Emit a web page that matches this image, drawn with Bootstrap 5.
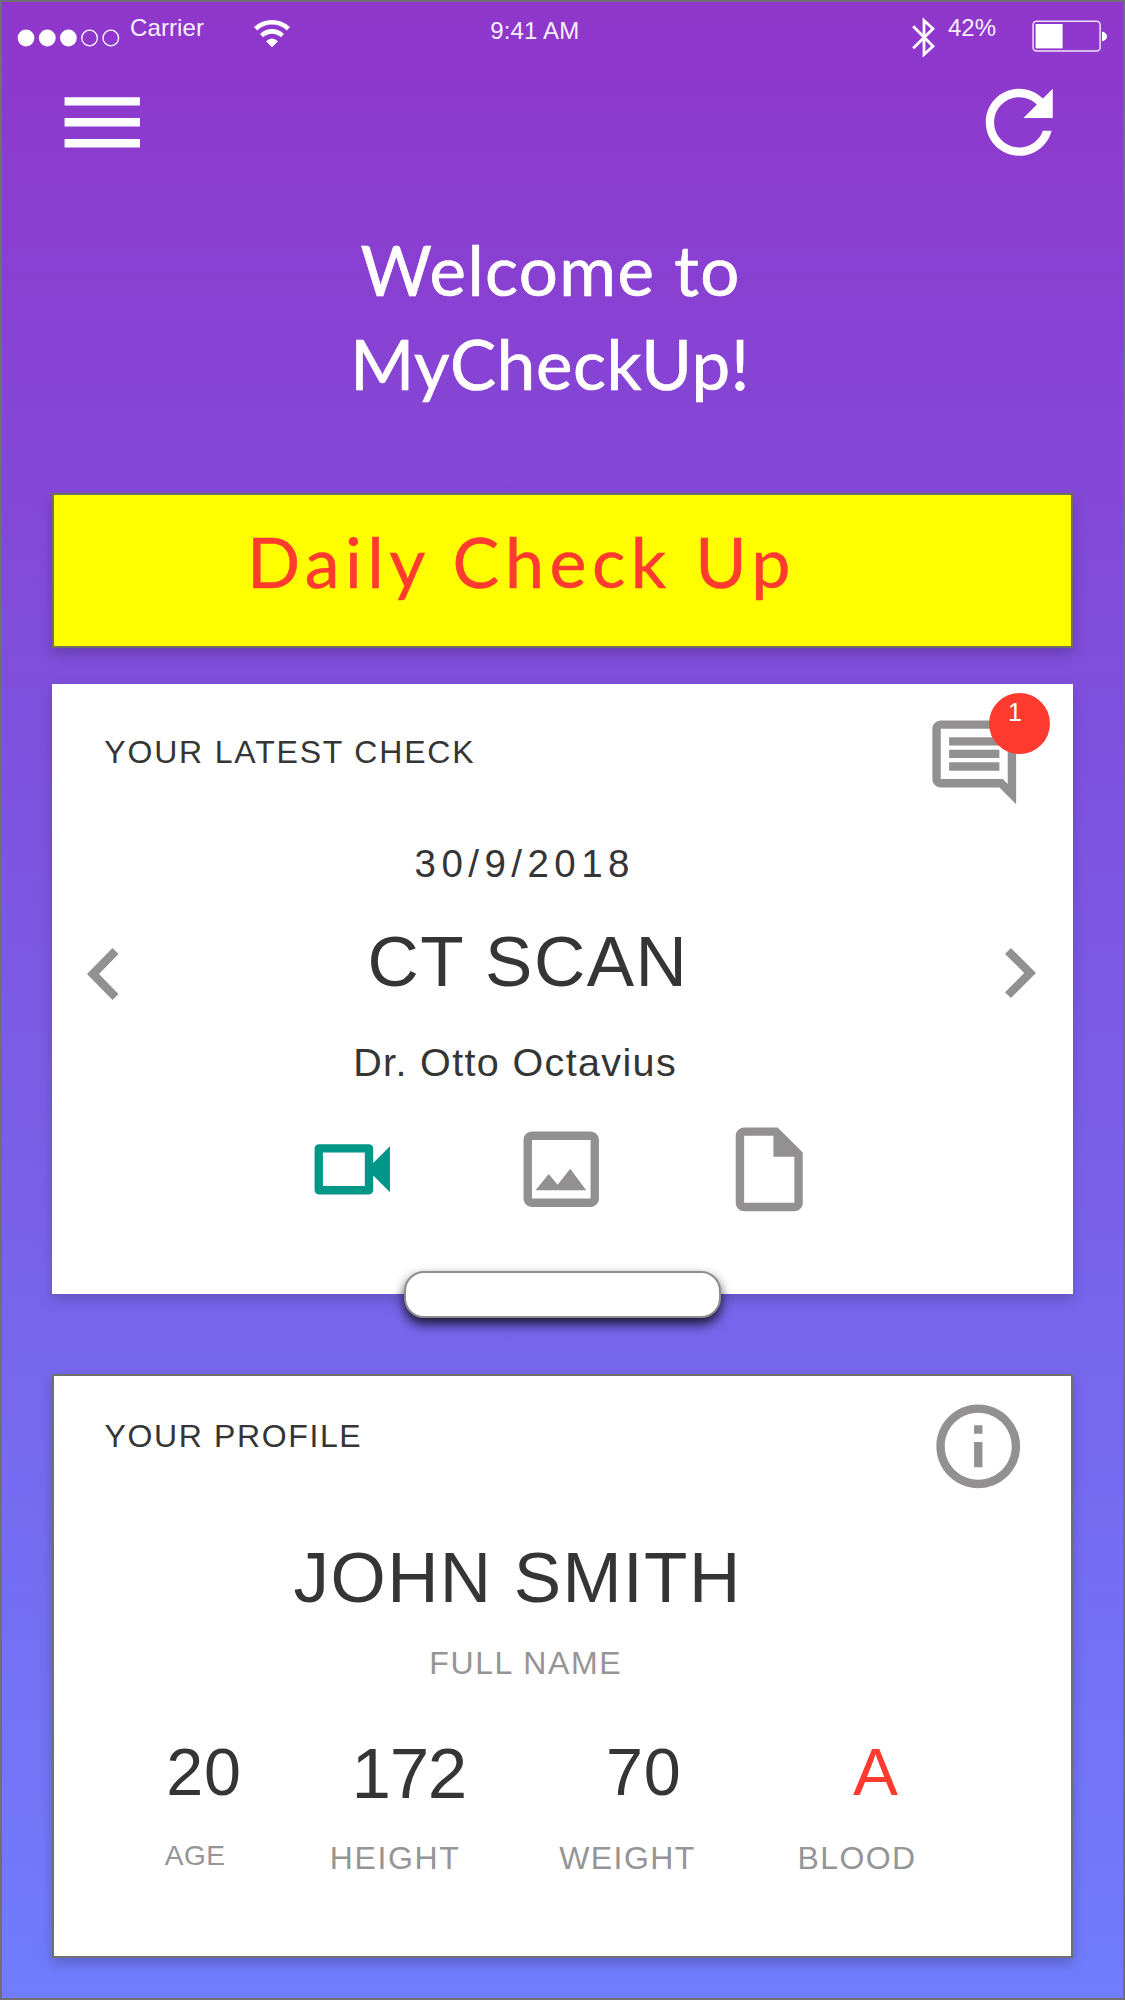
<!DOCTYPE html>
<html lang="en">
<head>
<meta charset="utf-8">
<meta name="viewport" content="width=device-width, initial-scale=1">
<title>MyCheckUp</title>
<link href="https://cdn.jsdelivr.net/npm/bootstrap@5.3.0/dist/css/bootstrap.min.css" rel="stylesheet">
<style>
body{margin:0;font-family:"Liberation Sans",Arial,sans-serif;color:#353535}
svg{display:block;flex:none}
.phone{width:1125px;height:2000px;border:2px solid #707070;background:linear-gradient(#9036cb,#7f4fdc 34%,#707dfc);overflow:hidden}
.tx{white-space:nowrap;font-weight:400;margin-bottom:0}
.ico{width:100.5px;height:100.5px;fill:#929091}
/* status bar */
.status{height:60px;font-size:24px;line-height:28px;color:#f6efff;padding-top:12.4px}
.status-left{width:488.3px;padding-left:14px}
.dots{margin-top:13.400px}
.carrier{margin-left:10px;letter-spacing:.1px;width:124px}
.wifi{margin-top:5.600px}
.clock{margin-top:3px;letter-spacing:.14px}
.status-right{padding-right:15px}
.bt{margin-top:3px}
.pct{margin-left:12px;width:84px}
.batt{margin-top:5.500px}
/* toolbar */
.toolbar{height:110px;padding:9.500px 53.400px 0 49.500px}
.toolbar .ico{fill:#fff}
/* greeting */
.round-type{font-family:Lato,"Noto Sans",sans-serif}
.greet{margin-top:50.500px;font-size:69px;line-height:94.300px;color:#fff;-webkit-text-stroke:.7px #fff}
.greet-a{margin-left:358.600px;letter-spacing:1.400px}
.greet-b{margin-left:348.200px;letter-spacing:.600px}
.banner{margin:82.200px 50px 0 50.300px;height:155px;border:2px solid #6f6f62;background:#ff0;box-shadow:0 6px 12px rgba(0,0,0,.2);padding:26px 0 0 192.600px}
.banner-text{font-size:70px;line-height:80px;letter-spacing:5.500px;color:#ff3b30;-webkit-text-stroke:.5px #ff3b30}
/* latest check */
.latest{margin:35.300px 50px 0 50px;height:610.400px;background:#fff;box-shadow:0 6px 12px rgba(0,0,0,.18)}
.head{padding:28.300px 48.700px 0 52.300px}
.head-title{font-size:32px;line-height:40px;letter-spacing:1.820px;margin-top:20.500px}
.count{left:64.700px;top:-19.300px;width:61.400px;height:61.400px;background:#ff3b30;color:#fff;font-size:25px;line-height:26px;padding:6px 0 0 19.600px}
.video{fill:#009688}
.chev{fill:#929091}
.chev-l{margin:136px 0 0 35px}
.chev-r{margin:135.400px 37px 0 0}
.date{margin:29.800px 0 0 296.100px;font-size:38.500px;line-height:44px;letter-spacing:5.450px}
.scan{margin:35.900px 0 0 249px;font-size:71px;line-height:80px;letter-spacing:1.500px}
.doc{margin:37.700px 0 0 234.700px;font-size:39.500px;line-height:44px;letter-spacing:1.360px}
.media{margin:35.200px 0 0 250.300px;gap:107.800px}
.grip{left:352px;top:587.700px;width:316.800px;height:46.300px;border:2px solid #8f8e8c;border-radius:20px;background:#fff;box-shadow:0 6px 12px rgba(0,0,0,.8)}
/* profile */
.profile{margin:80.300px 50px 0 50.300px;height:583.500px;border:2px solid #707070;background:#fff;box-shadow:0 6px 12px rgba(0,0,0,.2)}
.profile .head{padding:19.700px 42.300px 0 50.300px}
.profile .head-title{margin-top:20.300px;letter-spacing:1.620px}
.who{margin:41.700px 0 0 239.300px;font-size:71px;line-height:80px;letter-spacing:1.410px}
.cap{font-size:32px;line-height:40px;letter-spacing:1.600px;color:#959595}
.who-cap{margin:25px 0 0 375px}
.stats{margin-top:53.600px;padding-left:110.500px}
.stat-a{width:165px}.stat-h{width:229.400px}.stat-w{width:238.200px}
.val{font-size:66.500px;line-height:70px;letter-spacing:.700px}
.stat-a .val{margin-left:1.500px}
.stat-a .cap{font-size:28px;line-height:32px;letter-spacing:.500px;margin-top:33.500px}
.stat-h .val{font-size:71px;letter-spacing:-1.300px;margin:2.400px 0 0 21.700px}
.stat-h .cap{margin-top:29px}
.stat-w .val{margin-left:46.800px}
.stat-w .cap{margin-top:31.400px;letter-spacing:1.430px}
.stat-b .val{font-size:67.500px;margin-left:55.700px;color:#ff3b30}
.stat-b .cap{margin-top:31.400px;letter-spacing:1.440px}
</style>
<script src="https://cdn.jsdelivr.net/npm/bootstrap@5.3.0/dist/js/bootstrap.bundle.min.js"></script>
</head>
<body>
<main class="phone d-flex flex-column">
  <div class="status d-flex align-items-start">
    <div class="status-left d-flex align-items-start">
      <svg class="dots" width="104" height="20" viewBox="0 0 104 20" fill="#fff"><circle cx="10" cy="10" r="8.4"/><circle cx="31.3" cy="10" r="8.4"/><circle cx="52.4" cy="10" r="8.4"/><g fill="none" stroke="#fff" stroke-width="1.3"><circle cx="73.6" cy="10" r="7.8"/><circle cx="94.8" cy="10" r="7.8"/></g></svg>
      <span class="tx carrier">Carrier</span>
      <svg class="wifi" width="36" height="28" viewBox="0 0 36 28" fill="none" stroke="#fff" stroke-width="4.6"><path d="M1.6 8.8A24 24 0 0 1 34.4 8.8"/><path d="M7.6 15.6A15 15 0 0 1 28.4 15.6"/><path d="M12 21.2Q18 15.8 24 21.2L18 27.3Z" fill="#fff" stroke="none"/></svg>
    </div>
    <span class="tx clock">9:41 AM</span>
    <div class="status-right d-flex align-items-start ms-auto">
      <svg class="bt" width="24" height="41" viewBox="0 0 24 41" fill="none" stroke="#fff" stroke-width="2.8"><path d="M1.2 9.2L21 29.2L12 37.6V3.4L21 11.7L1.2 31.2"/></svg>
      <span class="tx pct">42%</span>
      <svg class="batt" width="76" height="33" viewBox="0 0 76 33"><rect x="1.1" y="1.3" width="67" height="29.6" rx="3.5" fill="none" stroke="#f0e2fa" stroke-width="1.5"/><rect x="3.6" y="4" width="27" height="24.4" fill="#fff"/><path d="M70 11.600Q75 13 75 16.600T70 21.400Z" fill="#fff"/></svg>
    </div>
  </div>

  <nav class="toolbar d-flex justify-content-between align-items-start">
    <svg class="ico" viewBox="0 0 24 24"><path d="M3 18h18v-2H3v2zm0-5h18v-2H3v2zm0-7v2h18V6H3z"/></svg>
    <svg class="ico" viewBox="0 0 24 24"><path d="M17.65 6.35C16.2 4.9 14.21 4 12 4c-4.42 0-7.99 3.58-7.99 8s3.57 8 7.99 8c3.73 0 6.84-2.55 7.73-6h-2.08c-.82 2.33-3.04 4-5.65 4-3.31 0-6-2.69-6-6s2.69-6 6-6c1.66 0 3.14.69 4.22 1.78L13 11h7V4l-2.35 2.35z"/></svg>
  </nav>

  <h1 class="tx greet round-type"><span class="d-block greet-a">Welcome to</span><span class="d-block greet-b">MyCheckUp!</span></h1>

  <div class="banner"><div class="tx banner-text round-type">Daily Check Up</div></div>

  <section class="latest position-relative">
    <div class="head d-flex justify-content-between align-items-start">
      <h2 class="tx head-title">YOUR LATEST CHECK</h2>
      <div class="position-relative">
        <svg class="ico" viewBox="0 0 24 24"><path fill-rule="evenodd" d="M22 4c0-1.1-.9-2-2-2H4c-1.1 0-2 .9-2 2v12c0 1.1.9 2 2 2h14l4 4V4zM20 4v13.17L18.83 16H4V4h16zM6 12h12v2H6v-2zm0-3h12v2H6V9zm0-3h12v2H6V6z"/></svg>
        <span class="count position-absolute rounded-circle">1</span>
      </div>
    </div>
    <div class="d-flex align-items-start">
      <svg class="chev chev-l" width="31.5" height="52" viewBox="8 6 7.41 12" preserveAspectRatio="none"><path d="M15.41 7.41L14 6l-6 6 6 6 1.41-1.41L10.83 12z"/></svg>
      <div class="flex-grow-1">
        <div class="tx date">30/9/2018</div>
        <div class="tx scan">CT SCAN</div>
        <div class="tx doc">Dr. Otto Octavius</div>
      </div>
      <svg class="chev chev-r" width="31" height="50" viewBox="8.59 6 7.41 12" preserveAspectRatio="none"><path d="M10 6L8.59 7.41 13.17 12l-4.58 4.59L10 18l6-6z"/></svg>
    </div>
    <div class="media d-flex">
      <svg class="ico video" viewBox="0 0 24 24"><path d="M15 8v8H5V8h10m1-2H4c-.55 0-1 .45-1 1v10c0 .55.45 1 1 1h12c.55 0 1-.45 1-1v-3.5l4 4v-11l-4 4V7c0-.55-.45-1-1-1z"/></svg>
      <svg class="ico" viewBox="0 0 24 24"><path d="M19 5v14H5V5h14m0-2H5c-1.1 0-2 .9-2 2v14c0 1.1.9 2 2 2h14c1.1 0 2-.9 2-2V5c0-1.1-.9-2-2-2zM14.14 11.86l-3 3.87L9 13.14 5.86 17h12.1z"/></svg>
      <svg class="ico" viewBox="0 0 24 24"><path fill-rule="evenodd" d="M6 2c-1.1 0-2 .9-2 2v16c0 1.1.9 2 2 2h12c1.1 0 2-.9 2-2V8l-6-6H6zM6 4v16h12V9h-5V4z"/></svg>
    </div>
    <div class="grip position-absolute"></div>
  </section>

  <section class="profile">
    <div class="head d-flex justify-content-between align-items-start">
      <h2 class="tx head-title">YOUR PROFILE</h2>
      <svg class="ico" viewBox="0 0 24 24"><path d="M11 7h2v2h-2zm0 4h2v6h-2zm1-9C6.48 2 2 6.48 2 12s4.48 10 10 10 10-4.48 10-10S17.52 2 12 2zm0 18c-4.41 0-8-3.59-8-8s3.59-8 8-8 8 3.59 8 8-3.59 8-8 8z"/></svg>
    </div>
    <div class="tx who">JOHN SMITH</div>
    <div class="tx cap who-cap">FULL NAME</div>
    <div class="stats d-flex align-items-start">
      <div class="stat-a"><div class="tx val">20</div><div class="tx cap">AGE</div></div>
      <div class="stat-h"><div class="tx val">172</div><div class="tx cap">HEIGHT</div></div>
      <div class="stat-w"><div class="tx val">70</div><div class="tx cap">WEIGHT</div></div>
      <div class="stat-b"><div class="tx val">A</div><div class="tx cap">BLOOD</div></div>
    </div>
  </section>
</main>
</body>
</html>
